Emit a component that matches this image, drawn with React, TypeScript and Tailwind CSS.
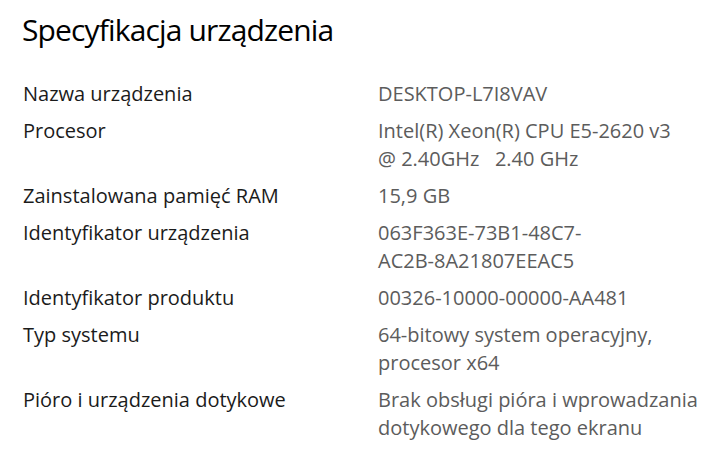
const rows: { label: string; value: string[] }[] = [
  { label: 'Nazwa urządzenia', value: ['DESKTOP-L7I8VAV'] },
  { label: 'Procesor', value: ['Intel(R) Xeon(R) CPU E5-2620 v3', '@ 2.40GHz\u00a0\u00a0\u00a02.40 GHz'] },
  { label: 'Zainstalowana pamięć RAM', value: ['15,9 GB'] },
  { label: 'Identyfikator urządzenia', value: ['063F363E-73B1-48C7-', 'AC2B-8A21807EEAC5'] },
  { label: 'Identyfikator produktu', value: ['00326-10000-00000-AA481'] },
  { label: 'Typ systemu', value: ['64-bitowy system operacyjny,', 'procesor x64'] },
  { label: 'Pióro i urządzenia dotykowe', value: ['Brak obsługi pióra i wprowadzania', 'dotykowego dla tego ekranu'] },
];

export default function App() {
  return (
    <div className="w-[715px] h-[456px] bg-white overflow-hidden font-['Open_Sans',sans-serif] pl-[22px] pt-[10px]">
      <h1 className="text-[30px] leading-[40px] tracking-[-0.85px] text-[#000000] font-normal">Specyfikacja urządzenia</h1>
      <div className="mt-[30px] flex flex-col gap-[9px]">
        {rows.map((r) => (
          <div key={r.label} className="grid grid-cols-[356px_1fr] text-[20px] leading-[28px]">
            <div className="text-[#1b1b1b] pl-[1px]">{r.label}</div>
            <div className="text-[#5c5c5c]">
              {r.value.map((v) => (
                <div key={v} className="whitespace-nowrap">{v}</div>
              ))}
            </div>
          </div>
        ))}
      </div>
    </div>
  );
}
